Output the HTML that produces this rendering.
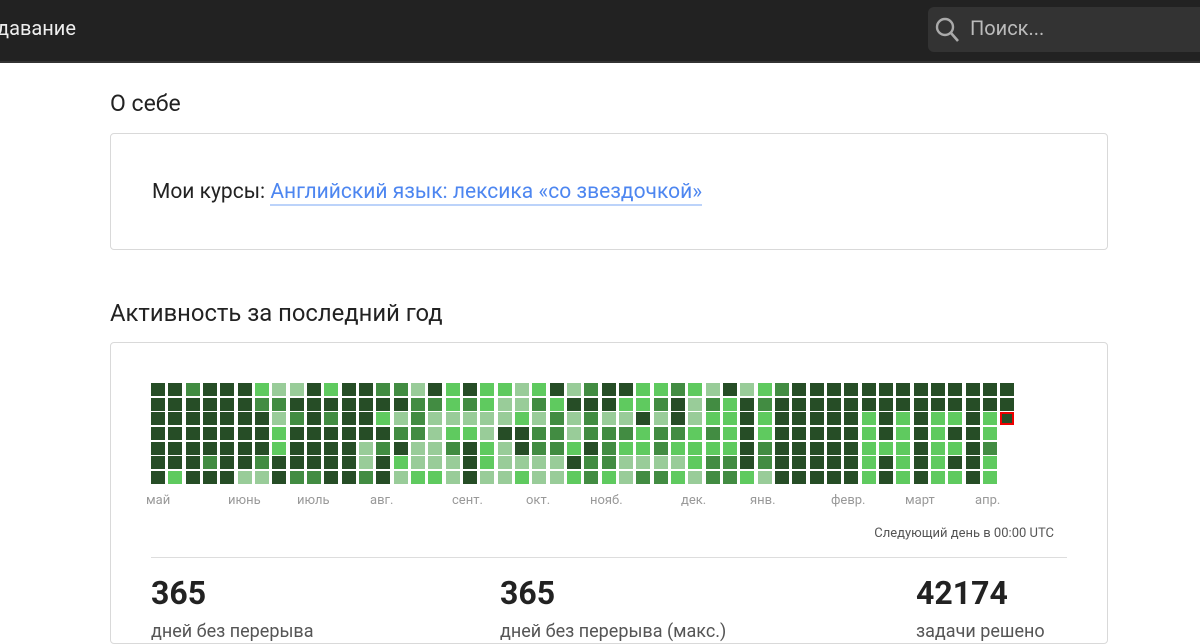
<!DOCTYPE html>
<html><head><meta charset="utf-8"><style>
body{margin:0;width:1200px;height:628px;overflow:hidden;background:#fff;font-family:"Roboto","Liberation Sans",sans-serif;color:#222;position:relative}
.abs{position:absolute;white-space:nowrap}
#hdr{position:absolute;left:0;top:0;width:1200px;height:61px;background:#222;border-bottom:2px solid #333}
.box{position:absolute;border:1px solid #d9d9d9;border-radius:4px;background:#fff}
.c{position:absolute;width:14px;height:13px}
.m{position:absolute;top:493px;font-size:13px;color:#999}
</style></head><body>
<div id="hdr"></div>
<div class="abs" style="left:-3px;top:16px;font-size:20px;color:#eee">давание</div>
<div class="abs" style="left:928px;top:7px;width:280px;height:45px;background:#333;border-radius:6px"></div>
<svg class="abs" style="left:934px;top:16px" width="28" height="28" viewBox="0 0 28 28"><circle cx="11" cy="11" r="8" fill="none" stroke="#aaa" stroke-width="2.4"/><line x1="17" y1="17" x2="24" y2="25" stroke="#aaa" stroke-width="2.6"/></svg>
<div class="abs" style="left:970px;top:16px;font-size:20px;color:#bbb">Поиск...</div>

<div class="abs" style="left:110px;top:90px;font-size:23px">О себе</div>
<div class="box" style="left:110px;top:133px;width:996px;height:115px"></div>
<div class="abs" style="left:152px;top:180px;font-size:21px">Мои курсы: <span style="color:#4d86f0;border-bottom:2px solid #bcd3fa">Английский язык: лексика «со звездочкой»</span></div>

<div class="abs" style="left:110px;top:299px;font-size:23.8px">Активность за последний год</div>
<div class="box" style="left:110px;top:342px;width:996px;height:300px"></div>
<div id="g"></div>
<div class="m" style="left:146px">май</div><div class="m" style="left:228px">июнь</div><div class="m" style="left:297px">июль</div><div class="m" style="left:370px">авг.</div><div class="m" style="left:452px">сент.</div><div class="m" style="left:526px">окт.</div><div class="m" style="left:590px">нояб.</div><div class="m" style="left:681px">дек.</div><div class="m" style="left:750px">янв.</div><div class="m" style="left:831px">февр.</div><div class="m" style="left:905px">март</div><div class="m" style="left:975px">апр.</div>
<div class="abs" style="right:146px;top:526px;font-size:13px;color:#555">Следующий день в 00:00 UTC</div>
<div class="abs" style="left:151px;top:557px;width:916px;height:1px;background:#ddd"></div>
<div class="abs" style="left:151px;top:574px;font-size:32px;font-weight:bold">365</div>
<div class="abs" style="left:500px;top:574px;font-size:32px;font-weight:bold">365</div>
<div class="abs" style="left:916px;top:574px;font-size:32px;font-weight:bold">42174</div>
<div class="abs" style="left:151px;top:621px;font-size:18px;color:#555">дней без перерыва</div>
<div class="abs" style="left:500px;top:621px;font-size:18px;color:#555">дней без перерыва (макс.)</div>
<div class="abs" style="left:916px;top:621px;font-size:18px;color:#555">задачи решено</div>
<script>
var rows=[
"DDMDDDLPPDLDDMMPDLDLLPLDP"+"MDDLLMLPDPLMDDDDDDDDDDDDD",
"DDDDDDMMDDDDDDDMMLMLPPMLD"+"DDLLMDPMLDMDDDDDDDDDDDDDD",
"DDDDDDDPMDMDDLPMPPPPPLPMP"+"MPPDPDPLLDLDDDDDLDLDLLDLR",
"DDDDDDDLDDDDDDMMPLLPDDMMP"+"MMMLMMLMLDLDDDDDLDLDLDDL",
"DDDDDDDLDDDDPMDPPMDLPDMML"+"DMLLMLLLLDMDDDDDLLLDLLDM",
"DDDMDDMDDDDDPDLPPPDLPPPPD"+"MMPPPPLMMDMDDDDDLDLDLDDL",
"DLDDDPPDMMDDMDPLLPDPPLPPL"+"MLPMMLPMMLPDDDDDLDLDLLDL"];
var col={D:"#264d26",M:"#428c42",L:"#5fca5f",P:"#99cc99",R:"#264d26"};
var h="";
for(var r=0;r<7;r++){var s=rows[r];for(var k=0;k<s.length;k++){var ch=s[k];var x=151+17.33*k,y=383+14.67*r;
h+='<div class="c" style="left:'+x.toFixed(1)+'px;top:'+y.toFixed(1)+'px;background:'+col[ch]+(ch=="R"?';box-shadow:inset 0 0 0 2px #e00':'')+'"></div>';}}
document.getElementById("g").innerHTML=h;
</script>
</body></html>
